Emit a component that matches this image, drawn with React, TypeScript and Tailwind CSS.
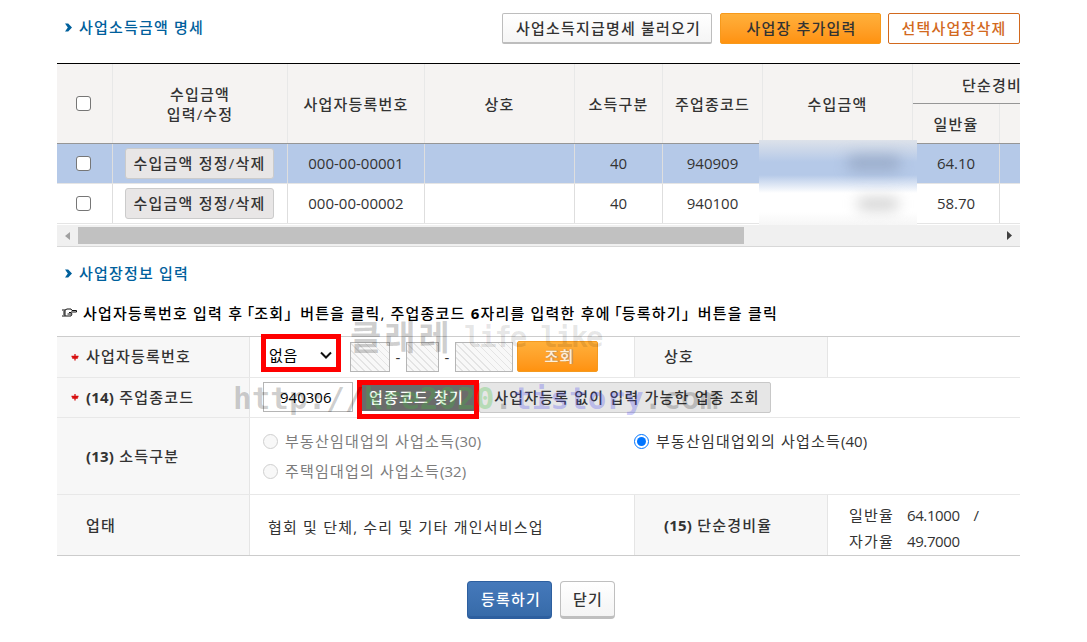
import React from "react";

const cols = "grid grid-cols-[56px_175px_137px_150px_88px_100px_150px_87px_20px]";

const rows = [
  { id: "000-00-00001", type: "40", code: "940909", rate: "64.10", selected: true },
  { id: "000-00-00002", type: "40", code: "940100", rate: "58.70", selected: false },
];

const SectionTitle = ({ children }: { children: React.ReactNode }) => (
  <h2 className="flex items-center gap-[7px] pl-2 text-[15px] font-medium leading-5 tracking-[1.2px] text-[#00609c]">
    <svg width="7" height="9" viewBox="0 0 7 9">
      <path d="M0 .5h3.2L7 4.5 3.2 8.5H0l2.8-4z" fill="#00609c" />
    </svg>
    <span>{children}</span>
  </h2>
);

const HeadCell = ({ children }: { children?: React.ReactNode }) => (
  <div className="flex h-full items-center justify-center border-r border-[#e8e8e8] text-center">{children}</div>
);

const Cell = ({ children }: { children?: React.ReactNode }) => (
  <div className="flex h-full items-center justify-center border-r border-[#dedede] tracking-normal">{children}</div>
);

const Checkbox = () => (
  <input type="checkbox" className="m-0 mr-[2px] size-[15px] appearance-none rounded-[3px] border border-[#767676] bg-white" />
);

const Label = ({ required, className = "", children }: { required?: boolean; className?: string; children: React.ReactNode }) => (
  <div className={`flex w-[193px] shrink-0 items-center border-r border-[#e5e5e5] bg-[#f7f7f7] font-medium ${className}`}>
    <span className="flex w-[29px] shrink-0 justify-end pr-[7px]">
      {required && (
        <svg width="8" height="8" viewBox="0 0 8 8">
          <path d="M4 1v6.500M.5 3.500h7M1.200 5h5.600" stroke="#d70f0f" strokeWidth="1.3" />
        </svg>
      )}
    </span>
    {children}
  </div>
);

const HatchedBox = ({ className }: { className: string }) => (
  <span
    className={`block h-[30px] border border-[#b5b5b5] bg-[repeating-linear-gradient(45deg,#f8f8f8_0px,#f8f8f8_4px,#e4e4e4_4px,#e4e4e4_5px)] ${className}`}
  />
);

const Radio = ({ checked, code, children }: { checked?: boolean; code: string; children: React.ReactNode }) => (
  <label className={`flex h-[30px] items-center gap-[7px] ${checked ? "" : "text-[#7c7c7c]"}`}>
    {checked ? (
      <span className="flex size-[15px] items-center justify-center rounded-full border-[1.500px] border-[#0075ff] bg-white">
        <span className="size-[9px] rounded-full bg-[#0075ff]" />
      </span>
    ) : (
      <span className="size-[15px] rounded-full border border-[#cfcfcf] bg-[#f8f8f8]" />
    )}
    <span>{children}<span className="tracking-normal">({code})</span></span>
  </label>
);

const OpenQuote = () => <span className="-ml-[4px] tracking-normal">「</span>;
const CloseQuote = () => <span className="-mr-[4px] tracking-normal">」</span>;

function IncomeTable() {
  return (
    <div className="relative mt-[19px] border-t border-black">
      <div className={`${cols} h-[80px] border-b border-[#969696] bg-[#f5f3f2] font-medium leading-5`}>
        <HeadCell><Checkbox /></HeadCell>
        <HeadCell>수입금액<br />입력/수정</HeadCell>
        <HeadCell>사업자등록번호</HeadCell>
        <HeadCell>상호</HeadCell>
        <HeadCell>소득구분</HeadCell>
        <HeadCell>주업종코드</HeadCell>
        <HeadCell>수입금액</HeadCell>
        <div className="col-span-2 overflow-hidden">
          <div className="flex h-10 items-center whitespace-nowrap border-b border-[#969696] pl-[49px] pt-[2px]">단순경비율</div>
          <div className="flex h-[39px] items-center">
            <div className="flex h-full w-[87px] items-center justify-center border-r border-[#e8e8e8]">일반율</div>
          </div>
        </div>
      </div>
      {rows.map((row) => (
        <div key={row.id} className={`${cols} h-10 border-b border-[#e5e5e5] ${row.selected ? "bg-[#b5c9e8]" : "bg-white"}`}>
          <Cell><Checkbox /></Cell>
          <Cell>
            <button className="mr-[2px] h-[31px] w-[149px] rounded-[3px] border border-[#cbcbcb] bg-[#e8e6e6] pl-px font-medium tracking-[1.2px]">수입금액 정정/삭제</button>
          </Cell>
          <Cell>{row.id}</Cell>
          <Cell />
          <Cell>{row.type}</Cell>
          <Cell>{row.code}</Cell>
          <Cell />
          <Cell>{row.rate}</Cell>
        </div>
      ))}

      {/* masked amounts */}
      <div className="absolute left-[702px] top-[76px] h-[85px] w-[158px] overflow-hidden bg-[linear-gradient(#dde2ea_0px,#b5c9e8_22px,#b5c9e8_35px,#ffffff_53px,#ffffff_72px,#f6f6f6_85px)]">
        <div className="absolute left-[88px] top-[15px] h-4 w-[54px] rounded-full bg-[#8a9bb8]/60 blur-[7px]" />
        <div className="absolute left-[98px] top-[58px] h-3 w-[42px] rounded-full bg-[#bbbbbb]/70 blur-[7px]" />
      </div>

      <div className="mt-px flex h-[22px] items-center border-b border-[#d8d8d8] bg-[#f0f0f0]">
        <svg className="ml-2 mr-2" width="5" height="8" viewBox="0 0 5 8"><path d="M5 0v8L0 4z" fill="#a0a0a0" /></svg>
        <div className="h-[17px] w-[666px] bg-[#c1c1c1]" />
        <svg className="ml-auto mr-2" width="5" height="9" viewBox="0 0 5 9"><path d="M0 0v9l5-4.500z" fill="#404040" /></svg>
      </div>
    </div>
  );
}

function BusinessForm() {
  return (
    <div className="relative mt-[13px] border-b border-t border-[#cccccc]">
      <div className="flex h-[41px] border-b border-[#e8e8e8]">
        <Label required className="pb-px">사업자등록번호</Label>
        <div className="flex flex-1 items-center pl-[11px]">
          <div className="-mt-2 flex h-[38px] w-20 items-center justify-between border-[5px] border-[#ff0000] bg-white pl-[3px] pr-1 pt-1 text-black">
            <span className="tracking-[.6px]">없음</span>
            <svg width="12" height="8" viewBox="0 0 12 8" fill="none"><path d="M1 1.500l5 5 5-5" stroke="#111" strokeWidth="2" /></svg>
          </div>
          <HatchedBox className="-mt-px ml-[9px] w-10" />
          <span className="w-4 text-center tracking-normal">-</span>
          <HatchedBox className="-mt-px w-[33px]" />
          <span className="w-4 text-center tracking-normal">-</span>
          <HatchedBox className="-mt-px w-[58px]" />
          <button className="-mt-[2px] ml-1 h-[31px] w-[81px] rounded-[2px] border border-[#f49a20] bg-linear-to-b from-[#ffb03a] to-[#ff920e] pl-1 font-medium text-[#fff0d8] [text-shadow:1px_0_1px_#888]">조회</button>
        </div>
        <Label className="w-[194px] border-l pb-px">상호</Label>
        <div className="w-[192px]" />
      </div>

      <div className="flex h-10 border-b border-[#e8e8e8]">
        <Label required className="pb-px"><span><b className="font-bold tracking-[.2px]">(14)</b> 주업종코드</span></Label>
        <div className="flex items-center pl-[13px]">
          <div className="-mt-px flex h-[30px] w-[90px] items-center border border-[#b5b5b5] pl-4 tracking-normal text-black">940306</div>
          <div className="ml-1 mt-[3px] h-[39px] w-[122px] border-[5px] border-[#ff0000] bg-white">
            <button className="block h-[26px] w-full bg-[#6b6b6b] pr-[3px] font-medium text-white">업종코드 찾기</button>
          </div>
          <button className="-mt-px h-[31px] w-[292px] whitespace-nowrap rounded-[2px] border border-[#c8c8c8] bg-[#e6e6e6] pl-1 font-medium">사업자등록 없이 입력 가능한 업종 조회</button>
        </div>
      </div>

      <div className="flex h-[77px] border-b border-[#e8e8e8]">
        <Label className="pt-px"><span><b className="font-bold tracking-[.2px]">(13)</b> 소득구분</span></Label>
        <div className="w-[371px] pl-[13px] pt-2">
          <Radio code="30">부동산임대업의 사업소득</Radio>
          <Radio code="32">주택임대업의 사업소득</Radio>
        </div>
        <div className="flex-1 pl-[13px] pt-2">
          <Radio checked code="40">부동산임대업외의 사업소득</Radio>
        </div>
      </div>

      <div className="flex h-[60px]">
        <Label className="pt-px">업태</Label>
        <div className="flex flex-1 items-center pl-[18px] pt-[5px]">협회 및 단체, 수리 및 기타 개인서비스업</div>
        <Label className="w-[194px] border-l pt-px"><span><b className="font-bold tracking-[.2px]">(15)</b> 단순경비율</span></Label>
        <div className="w-[192px] pl-[21px] pt-[7px] leading-[26px]">
          <div className="flex h-[26px]">
            <span className="w-[58px]">일반율</span>
            <span className="tracking-[-.4px]">64.1000</span>
            <span className="ml-[14px]">/</span>
          </div>
          <div className="flex h-[26px]">
            <span className="w-[58px]">자가율</span>
            <span className="tracking-[-.4px]">49.7000</span>
          </div>
        </div>
      </div>

      {/* blog watermark */}
      <div className="pointer-events-none absolute left-[293px] top-[-20px] flex whitespace-nowrap text-[34px] font-bold leading-10 text-black/20">
        <span className="w-[114px] tracking-[3px]">클래레</span>
        <span className="font-['DejaVu_Sans_Mono','Liberation_Mono',monospace] text-[29px] font-bold tracking-[-2.200px] text-black/10">life like</span>
      </div>
      <div className="pointer-events-none absolute left-[176px] top-[41px] whitespace-nowrap font-['DejaVu_Sans_Mono','Liberation_Mono',monospace] text-[31px] font-bold leading-10 tracking-normal text-black/20">
        http://<span className="text-[#40c040]/30">kre2020</span>.<span className="text-[#5050f0]/30">tistory</span>.com
      </div>
    </div>
  );
}

export default function App() {
  return (
    <main className="h-[642px] w-full overflow-hidden bg-white pl-[57px] font-['Open_Sans','Noto_Sans_CJK_KR',sans-serif] text-[15px] tracking-[1.2px] text-[#333333]">
      <div className="w-[963px]">
        <header className="flex items-start pt-[13px]">
          <div className="pt-1"><SectionTitle>사업소득금액 명세</SectionTitle></div>
          <div className="ml-auto flex h-[31px] font-medium">
            <button className="mr-2 w-[210px] whitespace-nowrap rounded-[2px] border border-b-2 border-[#bdbdbd] bg-linear-to-b from-white to-[#f5f5f5] pl-[3px]">사업소득지급명세 불러오기</button>
            <button className="mr-[7px] w-[161px] rounded-[2px] border border-[#f7991b] bg-linear-to-b from-[#ffb03a] to-[#ff920e] pl-[2px]">사업장 추가입력</button>
            <button className="w-[132px] rounded-[2px] border border-[#d2691e] bg-white text-[#d2691e]">선택사업장삭제</button>
          </div>
        </header>

        <IncomeTable />

        <div className="mt-4"><SectionTitle>사업장정보 입력</SectionTitle></div>
        <p className="mt-5 flex h-5 items-center gap-[6px] pl-[5px] font-medium text-black">
          <svg width="15" height="10" viewBox="0 0 15 10" fill="none" stroke="#111">
            <path d="M0 2h3l2-1h4l1 1.500h4.500v1.500H9M3 8h6l1-2-1-1.500H7M9 6H5.500M0 8h3V2M1 4h2M1 6h2" />
          </svg>
          <span className="whitespace-nowrap">
            사업자등록번호 입력 후<OpenQuote />조회<CloseQuote /> 버튼을 클릭, 주업종코드 <b>6</b>자리를 입력한 후에<OpenQuote />등록하기<CloseQuote /> 버튼을 클릭
          </span>
        </p>

        <BusinessForm />

        <div className="flex justify-center gap-2 pl-1 pt-[25px] font-medium">
          <button className="h-[38px] w-[85px] rounded-[4px] border border-b-[3px] border-[#2d5f9f] bg-linear-to-b from-[#4579bb] to-[#376ba9] pl-1 text-white">등록하기</button>
          <button className="h-[38px] w-[55px] rounded-[4px] border border-b-[3px] border-[#bfbfbf] bg-linear-to-b from-white to-[#f4f4f4] pl-[2px]">닫기</button>
        </div>
      </div>
    </main>
  );
}
